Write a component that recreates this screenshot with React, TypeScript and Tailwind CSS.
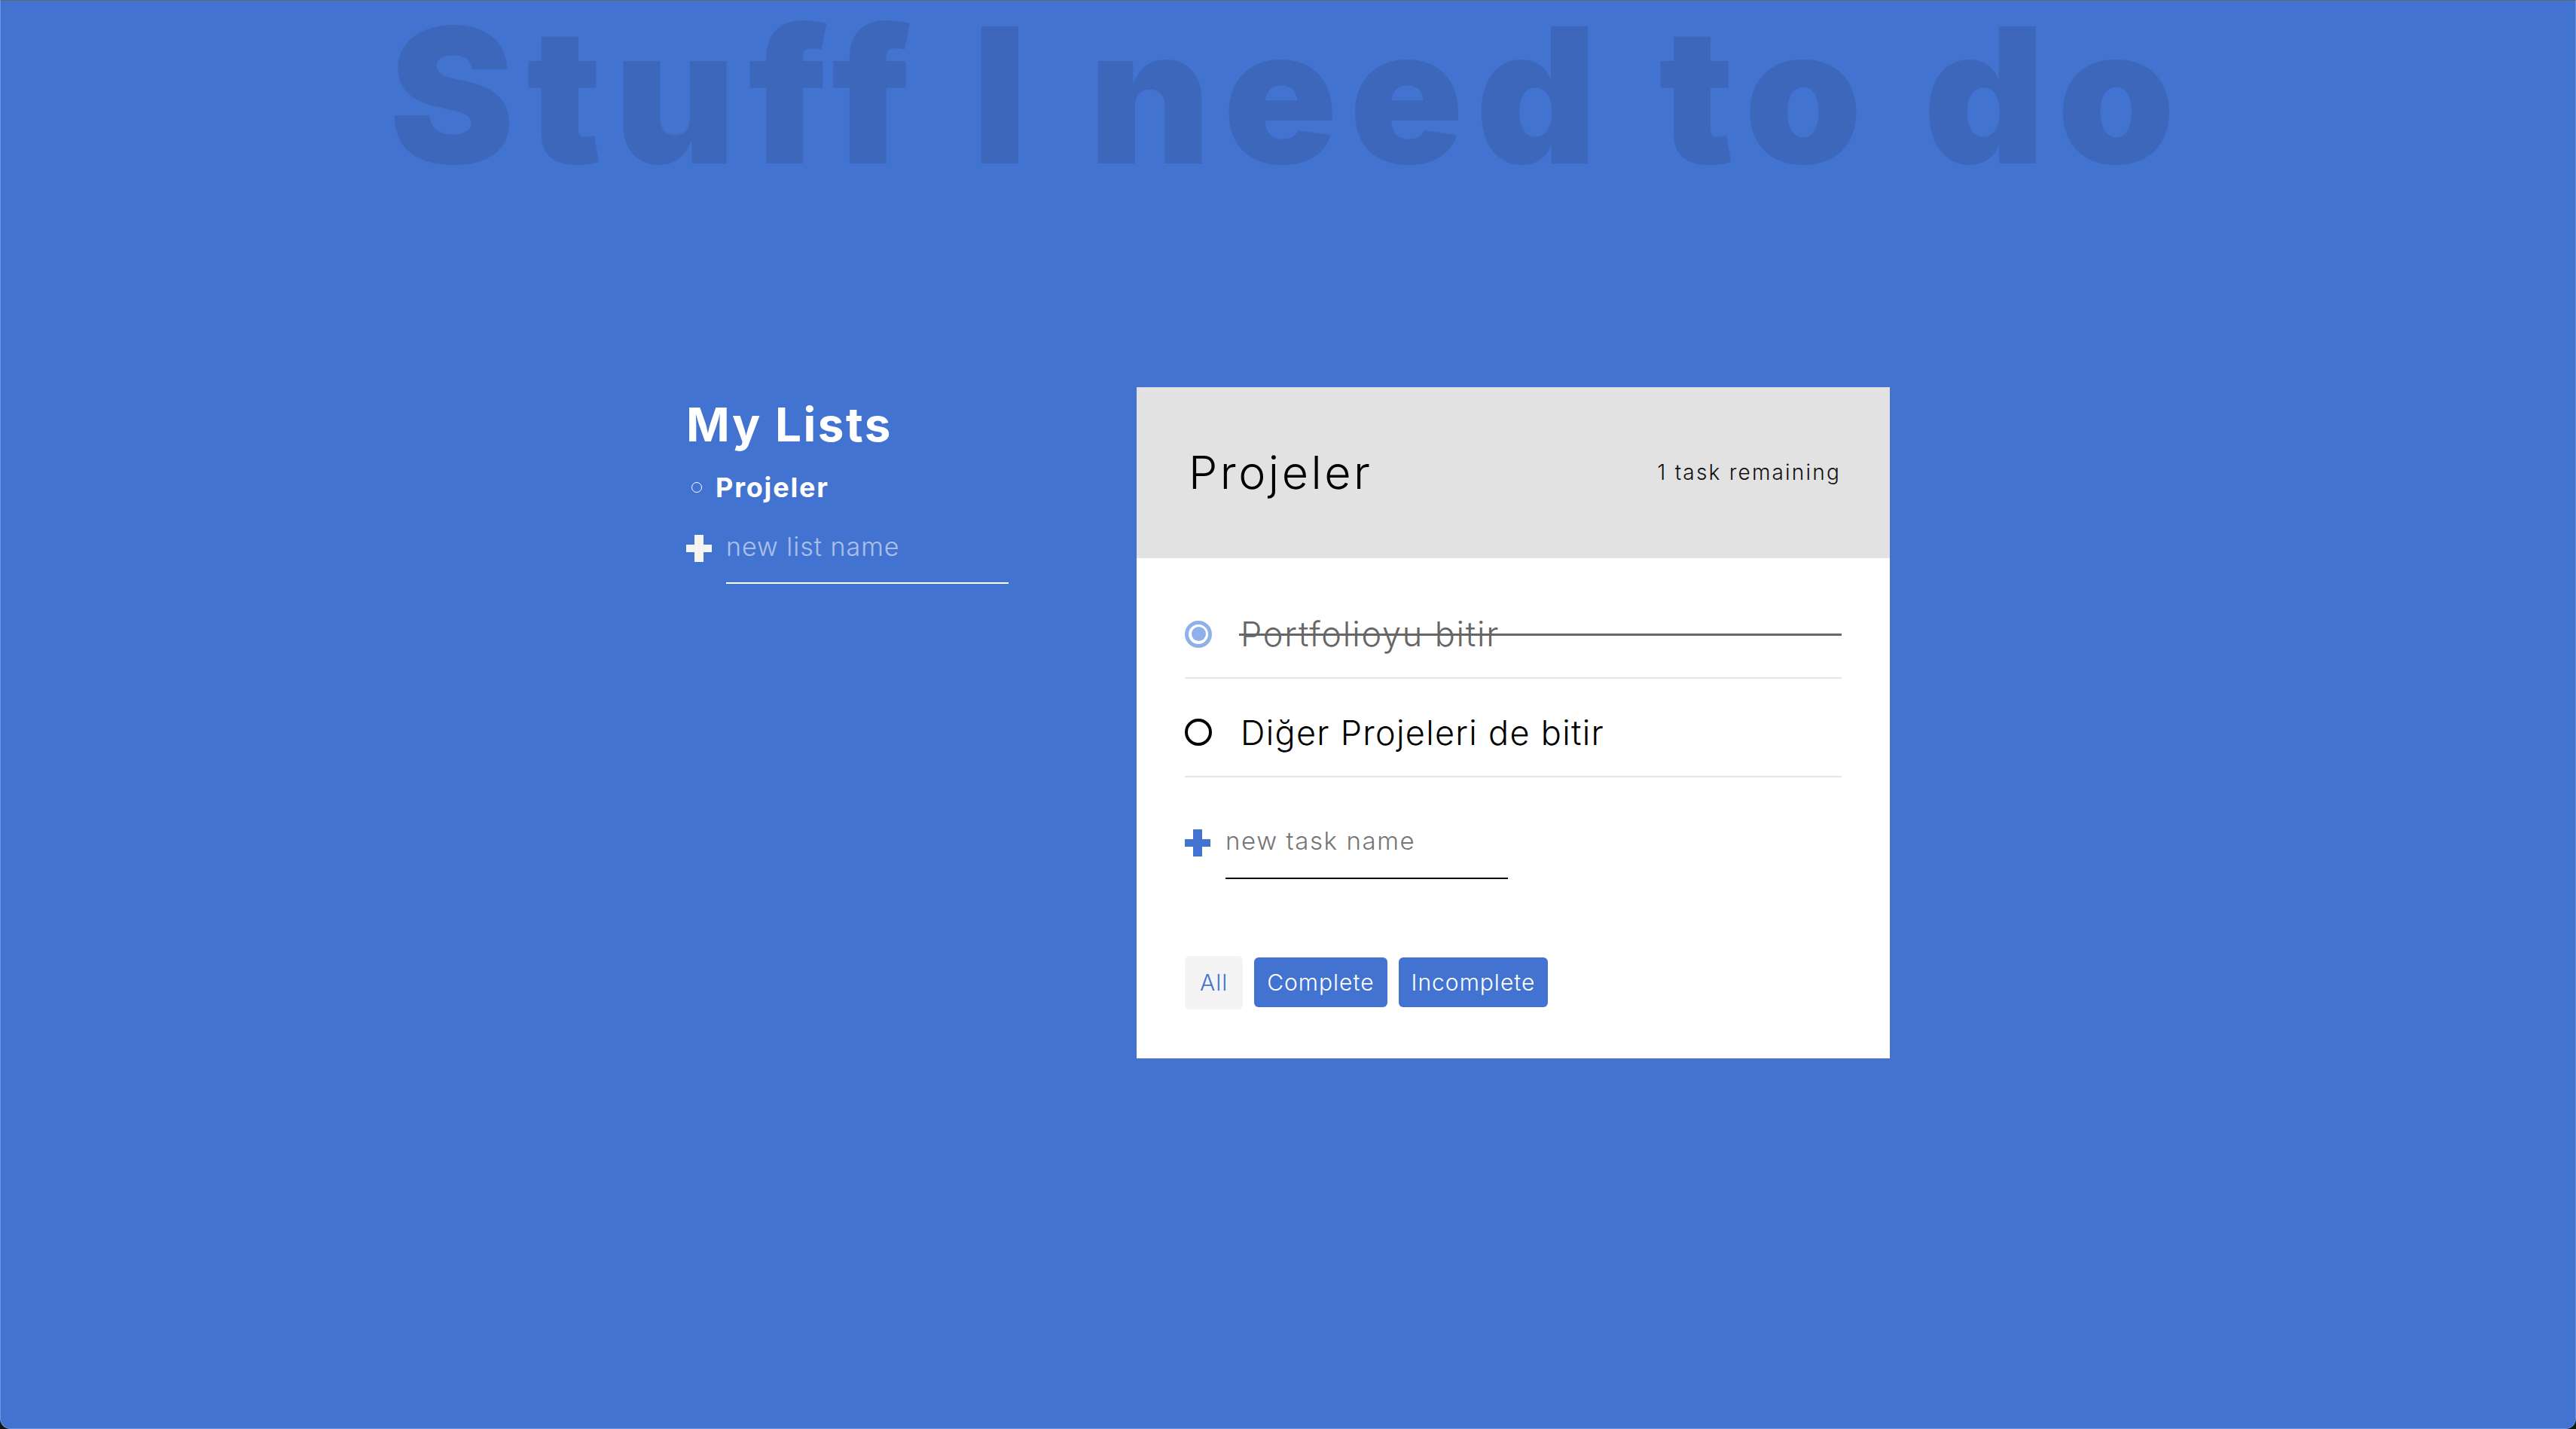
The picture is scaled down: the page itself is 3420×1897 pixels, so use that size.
import React from "react";

function Plus({ color, className }: { color: string; className?: string }) {
  return (
    <svg className={className} width="34" height="36" viewBox="0 0 34 36">
      <rect x="11" y="0" width="12" height="36" fill={color} />
      <rect x="0" y="13" width="34" height="10" fill={color} />
    </svg>
  );
}

export default function App() {
  const font = { fontFamily: "Inter, 'Noto Sans', sans-serif" };
  return (
    <div className="w-full h-[1897px] bg-[#0c1a12]" style={font}>
      <div className="h-[1897px] bg-[#4373d1] border-t border-[#666666] border-r border-r-[#6d95e2] border-l border-l-[#6d95e2] border-b border-b-[#6d95e2] rounded-b-[14px] overflow-hidden">
        <h1 className="-mt-[26px] text-center font-black text-[250px] leading-[1.21] text-black/10 tracking-[16px] whitespace-nowrap">
          Stuff I need to do
        </h1>
        <div className="flex justify-center mt-[236px]">
          <div className="w-[596px] text-white">
            <h2 className="mt-[19px] text-[62px] leading-none font-bold tracking-[2.5px]">My Lists</h2>
            <ul className="mt-[34px]">
              <li className="flex items-center h-[36px] text-[36px] leading-none font-bold">
                <span className="ml-[7px] w-[14px] h-[14px] rounded-full border-[1.5px] border-white"></span>
                <span className="ml-[18px] tracking-[1.8px]">Projeler</span>
              </li>
            </ul>
            <div className="mt-[44px] flex items-start">
              <Plus color="#f4f4f4" className="mt-[1px]" />
              <div className="ml-[19px] w-[375px] border-b-2 border-white pb-[30px] text-[34px] leading-none font-light tracking-[1px] text-white/55">
                new list name
              </div>
            </div>
          </div>
          <div className="w-[1000px] bg-white ml-[2px]">
            <div className="h-[227px] bg-[#e2e2e2] flex items-center justify-between pl-[69px] pr-[65px]">
              <div className="text-[61px] leading-none font-light tracking-[3.5px] text-black">Projeler</div>
              <div className="text-[28px] leading-none font-light tracking-[2.2px] text-[#111]">1 task remaining</div>
            </div>
            <div className="px-[64px] pt-[30px] pb-[65px]">
              <div className="h-[130px] pt-[14px] border-b-2 border-[#e5e5e5] flex items-center">
                <span className="w-[36px] h-[36px] rounded-full border-[5px] border-[#8fb0e8] flex items-center justify-center shrink-0">
                  <span className="w-[19px] h-[19px] rounded-full bg-[#8fb0e8]"></span>
                </span>
                <div className="relative flex-1 ml-[38px]">
                  <span className="text-[45px] leading-none font-light tracking-[1.8px] text-[#666]">Portfolioyu bitir</span>
                  <span className="absolute left-[-2px] right-0 top-1/2 h-[3px] -mt-[1px] bg-[#666]"></span>
                </div>
              </div>
              <div className="h-[131px] pt-[14px] border-b-2 border-[#e5e5e5] flex items-center">
                <span className="w-[36px] h-[36px] rounded-full border-[4px] border-black shrink-0"></span>
                <span className="ml-[38px] text-[45px] leading-none font-light tracking-[1.3px] text-black">Diğer Projeleri de bitir</span>
              </div>
              <div className="mt-[68px] flex items-start">
                <Plus color="#4373d1" className="mt-[1px]" />
                <div className="ml-[20px] w-[375px] border-b-2 border-black pb-[32px] text-[33px] leading-none font-light tracking-[1.6px] text-[#757575]">
                  new task name
                </div>
              </div>
              <div className="mt-[102px] flex items-center gap-[15px]">
                <button className="h-[71px] px-[20px] rounded-[6px] bg-[#f4f4f4] text-[#4373d1] text-[30px] font-light tracking-[1px] leading-none">All</button>
                <button className="h-[66px] px-[17px] rounded-[6px] bg-[#4373d1] text-white text-[30px] font-light tracking-[1px] leading-none">Complete</button>
                <button className="h-[66px] px-[17px] rounded-[6px] bg-[#4373d1] text-white text-[30px] font-light tracking-[1px] leading-none">Incomplete</button>
              </div>
            </div>
          </div>
        </div>
      </div>
    </div>
  );
}
